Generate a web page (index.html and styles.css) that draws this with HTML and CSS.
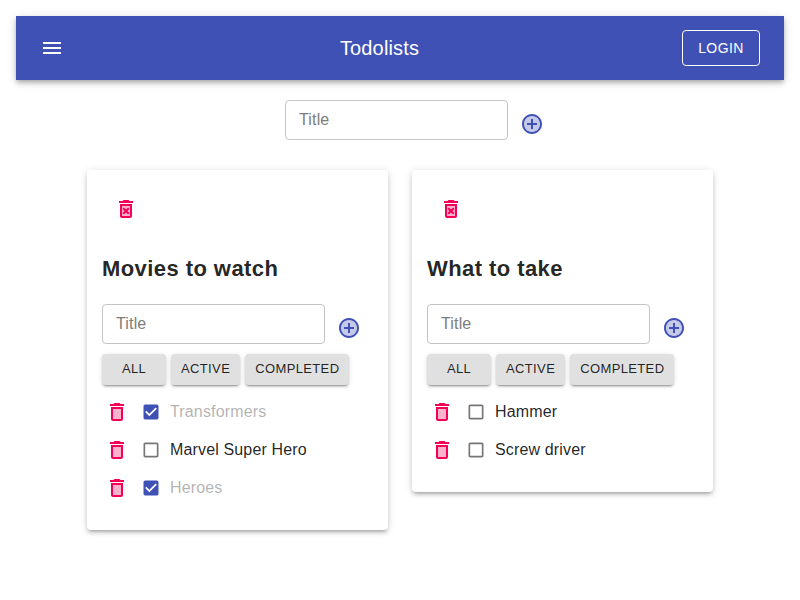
FILE: index.html
```html
<!DOCTYPE html>
<html lang="en">
<head>
<meta charset="utf-8">
<title>Todolists</title>
<link rel="stylesheet" href="styles.css">
</head>
<body>
<svg class="sprite" aria-hidden="true">
  <symbol id="add" viewBox="0 0 24 24"><path d="M12 4c-4.41 0-8 3.59-8 8s3.59 8 8 8 8-3.59 8-8-3.59-8-8-8zm5 9h-4v4h-2v-4H7v-2h4V7h2v4h4v2z" opacity=".3"/><path d="M12 2C6.48 2 2 6.48 2 12s4.48 10 10 10 10-4.48 10-10S17.52 2 12 2zm0 18c-4.41 0-8-3.59-8-8s3.59-8 8-8 8 3.59 8 8-3.59 8-8 8zm1-13h-2v4H7v2h4v4h2v-4h4v-2h-4V7z"/></symbol>
  <symbol id="del" viewBox="0 0 24 24"><path d="M8 9h8v10H8z" opacity=".3"/><path d="M15.500 4l-1-1h-5l-1 1H5v2h14V4zM6 19c0 1.100.9 2 2 2h8c1.100 0 2-.9 2-2V7H6v12zM8 9h8v10H8V9z"/></symbol>
  <symbol id="forever" viewBox="0 0 24 24"><path d="M8 9h8v10H8z" opacity=".3"/><path d="M6 19c0 1.100.9 2 2 2h8c1.100 0 2-.9 2-2V7H6v12zM8 9h8v10H8V9zM15.500 4l-1-1h-5l-1 1H5v2h14V4z"/><path d="M14.120 10.470L12 12.590l-2.130-2.120-1.410 1.410L10.590 14l-2.120 2.120 1.410 1.410L12 15.410l2.120 2.120 1.410-1.410L13.410 14l2.120-2.120z"/></symbol>
  <symbol id="on" viewBox="0 0 24 24"><path d="M19 3H5c-1.110 0-2 .9-2 2v14c0 1.100.89 2 2 2h14c1.110 0 2-.9 2-2V5c0-1.100-.89-2-2-2zm-9 14l-5-5 1.410-1.410L10 14.170l7.590-7.590L19 8l-9 9z"/></symbol>
  <symbol id="off" viewBox="0 0 24 24"><path d="M19 5v14H5V5h14m0-2H5c-1.100 0-2 .9-2 2v14c0 1.100.9 2 2 2h14c1.100 0 2-.9 2-2V5c0-1.100-.9-2-2-2z"/></symbol>
</svg>
<header class="bar">
  <svg class="icon" viewBox="0 0 24 24"><path d="M3 18h18v-2H3v2zm0-5h18v-2H3v2zm0-7v2h18V6H3z"/></svg>
  <h1>Todolists</h1>
  <button class="login">LOGIN</button>
</header>
<main>
  <form class="add-form add-list">
    <input placeholder="Title">
    <svg class="icon primary"><use href="#add"/></svg>
  </form>
  <div class="lists">
    <section class="card">
      <svg class="icon danger remove"><use href="#forever"/></svg>
      <h2>Movies to watch</h2>
      <form class="add-form"><input placeholder="Title"><svg class="icon primary"><use href="#add"/></svg></form>
      <div class="filters"><button>ALL</button><button>ACTIVE</button><button>COMPLETED</button></div>
      <ul>
        <li class="done"><svg class="icon danger"><use href="#del"/></svg><svg class="check primary"><use href="#on"/></svg><span>Transformers</span></li>
        <li><svg class="icon danger"><use href="#del"/></svg><svg class="check"><use href="#off"/></svg><span>Marvel Super Hero</span></li>
        <li class="done"><svg class="icon danger"><use href="#del"/></svg><svg class="check primary"><use href="#on"/></svg><span>Heroes</span></li>
      </ul>
    </section>
    <section class="card">
      <svg class="icon danger remove"><use href="#forever"/></svg>
      <h2>What to take</h2>
      <form class="add-form"><input placeholder="Title"><svg class="icon primary"><use href="#add"/></svg></form>
      <div class="filters"><button>ALL</button><button>ACTIVE</button><button>COMPLETED</button></div>
      <ul>
        <li><svg class="icon danger"><use href="#del"/></svg><svg class="check"><use href="#off"/></svg><span>Hammer</span></li>
        <li><svg class="icon danger"><use href="#del"/></svg><svg class="check"><use href="#off"/></svg><span>Screw driver</span></li>
      </ul>
    </section>
  </div>
</main>
</body>
</html>
```
FILE: styles.css
```css
* { box-sizing: border-box; }
body {
  margin: 0;
  padding: 16px;
  background: #fff;
  color: rgba(0, 0, 0, .87);
  font-family: "Liberation Sans", Arial, sans-serif;
}
.sprite { display: none; }
.icon { display: block; flex: none; width: 24px; height: 24px; fill: currentColor; }
.primary { color: #3f51b5; }
.danger { color: #f50057; }
button, input { font-family: inherit; margin: 0; }

.bar {
  display: flex;
  align-items: center;
  justify-content: space-between;
  height: 64px;
  padding: 0 24px;
  background: #3f51b5;
  color: #fff;
  box-shadow: 0 2px 4px -1px rgba(0, 0, 0, .2), 0 4px 5px rgba(0, 0, 0, .14), 0 1px 10px rgba(0, 0, 0, .12);
}
.bar h1 {
  margin: 0 0 0 13px;
  font-size: 20px;
  font-weight: 400;
  line-height: 32px;
  letter-spacing: .15px;
}
.login {
  width: 78px;
  height: 36px;
  padding: 0;
  border: 1px solid #fff;
  border-radius: 4px;
  background: none;
  color: #fff;
  font-size: 14px;
  letter-spacing: .4px;
}

.add-form { display: flex; align-items: center; gap: 12px; height: 40px; }
.add-form .icon { margin-top: 8px; }
.add-form input {
  width: 223px;
  height: 40px;
  padding: 0 13px;
  border: 1px solid #c4c4c4;
  border-radius: 4px;
  font-size: 16px;
  letter-spacing: .15px;
}
.add-form input::placeholder { color: #7d7d7d; opacity: 1; }
.add-list { margin: 20px 0 30px 269px; }

.lists { display: flex; align-items: flex-start; justify-content: center; gap: 24px; }
.card {
  width: 301px;
  padding: 27px 15px 23px;
  border-radius: 4px;
  box-shadow: 0 3px 3px -2px rgba(0, 0, 0, .2), 0 3px 4px rgba(0, 0, 0, .14), 0 1px 8px rgba(0, 0, 0, .12);
}
.remove { margin-left: 12px; }
.card h2 {
  margin: 32px 0 20px;
  font-size: 22px;
  line-height: 31px;
  letter-spacing: .43px;
}
.filters { display: flex; gap: 5px; margin-top: 10px; }
.filters button {
  min-width: 64px;
  height: 31px;
  padding: 0 10px 2px;
  border: 0;
  border-radius: 4px;
  background: #e0e0e0;
  color: rgba(0, 0, 0, .87);
  font-size: 13px;
  letter-spacing: .37px;
  box-shadow: 0 3px 1px -2px rgba(0, 0, 0, .2), 0 2px 2px rgba(0, 0, 0, .14), 0 1px 5px rgba(0, 0, 0, .12);
}
.card ul { margin: 8px 0 0; padding: 0; list-style: none; }
.card li { display: flex; align-items: center; height: 38px; padding-left: 3px; }
.check { flex: none; width: 20px; height: 20px; margin: 0 9px 0 12px; fill: currentColor; }
.check:not(.primary) { color: rgba(0, 0, 0, .54); }
.card li span { font-size: 16px; line-height: 20px; letter-spacing: .15px; }
.done span { opacity: .35; }
```
